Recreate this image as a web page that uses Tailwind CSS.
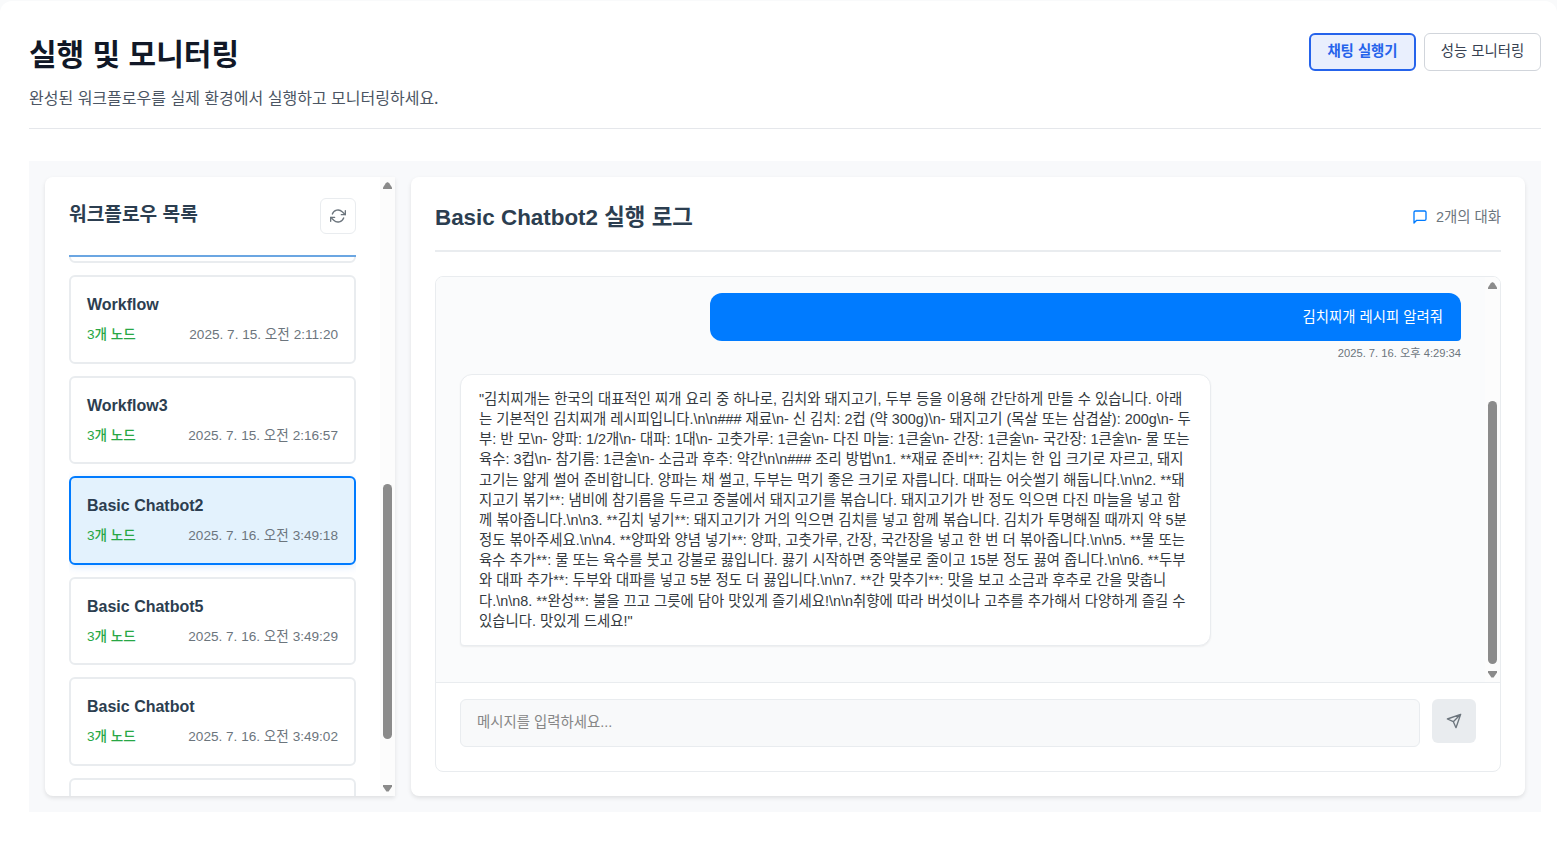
<!DOCTYPE html>
<html lang="ko">
<head>
<meta charset="utf-8">
<title>실행 및 모니터링</title>
<script src="https://cdn.jsdelivr.net/npm/@tailwindcss/browser@4"></script>
</head>
<body class="h-[845px] overflow-hidden bg-[#f9fafb] pt-px font-['Liberation_Sans','Noto_Sans_CJK_KR',sans-serif]">
<main class="h-[844px] rounded-t-xl bg-white pl-[29px] pr-4">
  <header class="flex h-32 items-start justify-between border-b border-[#e5e7eb] pt-8 font-['Noto_Sans_CJK_KR',sans-serif]">
    <div class="-mt-[2px]">
      <h1 class="h-[42px] text-[30px] leading-[42px] font-bold whitespace-nowrap text-[#111827]">실행 및 모니터링</h1>
      <p class="mt-3 h-6 text-[16px] leading-6 whitespace-nowrap text-[#4b5563]">완성된 워크플로우를 실제 환경에서 실행하고 모니터링하세요.</p>
    </div>
    <div class="flex gap-2 text-[14.4px]">
      <button class="flex h-[38px] w-[107px] items-center justify-center rounded-md border-2 border-[#2563eb] bg-[#e9effd] pb-[5px] font-bold whitespace-nowrap text-[#2563eb]">채팅 실행기</button>
      <button class="flex h-[38px] w-[117px] items-center justify-center rounded-md border border-[#d1d5db] bg-white pb-[5px] whitespace-nowrap text-[#374151]">성능 모니터링</button>
    </div>
  </header>

  <section class="mt-8 flex h-[651px] gap-4 bg-[#f8f9fb] px-4 pt-4 pb-4">
    <aside class="flex h-[619px] w-[350px] shrink-0 rounded-l-lg bg-white shadow-[0_2px_4px_rgba(0,0,0,0.1)]">
      <div class="flex w-[335px] flex-col overflow-hidden rounded-l-lg pr-6 pl-6">
        <div class="flex h-20 shrink-0 items-start justify-between border-b-2 border-[#6ba6e2] pt-[21px]">
          <h2 class="pt-px text-[19.2px] leading-[32px] font-bold whitespace-nowrap text-[#2c3e50]">워크플로우 목록</h2>
          <button class="flex size-9 items-center justify-center rounded-md border border-[#e9ecef] bg-white text-[#6c757d]">
            <svg class="size-4" viewBox="0 0 24 24" fill="none" stroke="currentColor" stroke-width="2" stroke-linecap="round" stroke-linejoin="round"><path d="M23 4v6h-6M1 20v-6h6"/><path d="M3.51 9a9 9 0 0 1 14.85-3.36L23 10M1 14l4.64 4.36A9 9 0 0 0 20.49 15"/></svg>
          </button>
        </div>
        <div class="flex min-h-0 flex-1 flex-col gap-3 overflow-hidden">
          <div class="-mt-[82px] h-[88.45px] shrink-0 rounded-md border-2 border-[#e9ecef]"></div>
          <div class="h-[88.45px] shrink-0 rounded-md border-2 border-[#e9ecef] px-4 pt-[15.6px]">
            <h3 class="text-base leading-6 font-bold text-[#2c3e50]">Workflow</h3>
            <div class="mt-2 flex justify-between text-[13.6px] leading-5 whitespace-nowrap text-[#6c757d]"><span class="font-medium text-[#28a745]">3개 노드</span><span>2025. 7. 15. 오전 2:11:20</span></div>
          </div>
          <div class="h-[88.45px] shrink-0 rounded-md border-2 border-[#e9ecef] px-4 pt-4">
            <h3 class="text-base leading-6 font-bold text-[#2c3e50]">Workflow3</h3>
            <div class="mt-2 flex justify-between text-[13.6px] leading-5 whitespace-nowrap text-[#6c757d]"><span class="font-medium text-[#28a745]">3개 노드</span><span>2025. 7. 15. 오전 2:16:57</span></div>
          </div>
          <div class="h-[88.45px] shrink-0 rounded-md border-2 border-[#007bff] bg-[#e3f2fd] px-4 pt-[15.6px] shadow-[0_2px_8px_rgba(0,123,255,0.15)]">
            <h3 class="text-base leading-6 font-bold text-[#2c3e50]">Basic Chatbot2</h3>
            <div class="mt-2 flex justify-between text-[13.6px] leading-5 whitespace-nowrap text-[#6c757d]"><span class="font-medium text-[#28a745]">3개 노드</span><span>2025. 7. 16. 오전 3:49:18</span></div>
          </div>
          <div class="h-[88.45px] shrink-0 rounded-md border-2 border-[#e9ecef] px-4 pt-4">
            <h3 class="text-base leading-6 font-bold text-[#2c3e50]">Basic Chatbot5</h3>
            <div class="mt-2 flex justify-between text-[13.6px] leading-5 whitespace-nowrap text-[#6c757d]"><span class="font-medium text-[#28a745]">3개 노드</span><span>2025. 7. 16. 오전 3:49:29</span></div>
          </div>
          <div class="h-[88.45px] shrink-0 rounded-md border-2 border-[#e9ecef] px-4 pt-[15.6px]">
            <h3 class="text-base leading-6 font-bold text-[#2c3e50]">Basic Chatbot</h3>
            <div class="mt-2 flex justify-between text-[13.6px] leading-5 whitespace-nowrap text-[#6c757d]"><span class="font-medium text-[#28a745]">3개 노드</span><span>2025. 7. 16. 오전 3:49:02</span></div>
          </div>
          <div class="h-[88.45px] shrink-0 rounded-md border-2 border-[#e9ecef]"></div>
        </div>
      </div>
      <div class="flex w-[15px] flex-col items-center bg-[#fcfcfc] pt-[5px]">
        <svg class="h-2 w-[9px] shrink-0" viewBox="0 0 9 8" fill="#8b8b8b"><path d="M4 .2h1L6.2 1.2 9 5.6V7H0V5.6L2.8 1.2z"/></svg>
        <div class="mt-[294px] h-[255px] w-[9px] shrink-0 rounded-full bg-[#8b8b8b]"></div>
        <svg class="mt-[45px] h-2 w-[9px] shrink-0" viewBox="0 0 9 8" fill="#8b8b8b"><path d="M0 1h9v1.4L5.6 7.4H3.4L0 2.4z"/></svg>
      </div>
    </aside>

    <article class="flex h-[619px] w-[1114px] shrink-0 flex-col rounded-lg bg-white px-6 shadow-[0_2px_4px_rgba(0,0,0,0.1)]">
      <div class="flex h-[75px] shrink-0 items-center justify-between border-b-2 border-[#e9ecef] pt-[6px]">
        <h2 class="pt-[2px] text-[22.4px] leading-8 font-bold whitespace-nowrap text-[#2c3e50]">Basic Chatbot2 실행 로그</h2>
        <div class="flex items-center gap-2 text-[14.4px] leading-5 whitespace-nowrap text-[#6c757d]">
          <svg class="size-4 text-[#007bff]" viewBox="0 0 24 24" fill="none" stroke="currentColor" stroke-width="2" stroke-linecap="round" stroke-linejoin="round"><path d="M21 15a2 2 0 0 1-2 2H7l-4 4V5a2 2 0 0 1 2-2h14a2 2 0 0 1 2 2z"/></svg>
          <span>2개의 대화</span>
        </div>
      </div>
      <div class="mt-6 flex h-[496px] shrink-0 flex-col overflow-hidden rounded-lg border border-[#e9ecef]">
        <div class="flex h-[405px] shrink-0 bg-[#fafbfc]">
          <div class="flex w-[1049px] flex-col px-6 pt-4">
            <div class="flex h-12 w-[751px] items-center justify-end self-end rounded-[12px] rounded-br-[4px] bg-[#007bff] px-[18px] pt-[2px] text-[14.4px] whitespace-nowrap text-white">김치찌개 레시피 알려줘</div>
            <div class="mt-1 h-4 self-end text-[11.2px] leading-4 whitespace-nowrap text-[#6c757d]">2025. 7. 16. 오후 4:29:34</div>
            <div class="mt-[13px] h-[272px] w-[751px] shrink-0 rounded-[12px] rounded-bl-[4px] border border-[#e9ecef] bg-white px-[18px] pt-[14px] text-[14.4px] leading-[20.16px] whitespace-nowrap text-[#343a40] shadow-[0_1px_2px_rgba(0,0,0,0.06)]">
              <p>"김치찌개는 한국의 대표적인 찌개 요리 중 하나로, 김치와 돼지고기, 두부 등을 이용해 간단하게 만들 수 있습니다. 아래</p>
              <p>는 기본적인 김치찌개 레시피입니다.\n\n### 재료\n- 신 김치: 2컵 (약 300g)\n- 돼지고기 (목살 또는 삼겹살): 200g\n- 두</p>
              <p>부: 반 모\n- 양파: 1/2개\n- 대파: 1대\n- 고춧가루: 1큰술\n- 다진 마늘: 1큰술\n- 간장: 1큰술\n- 국간장: 1큰술\n- 물 또는</p>
              <p>육수: 3컵\n- 참기름: 1큰술\n- 소금과 후추: 약간\n\n### 조리 방법\n1. **재료 준비**: 김치는 한 입 크기로 자르고, 돼지</p>
              <p>고기는 얇게 썰어 준비합니다. 양파는 채 썰고, 두부는 먹기 좋은 크기로 자릅니다. 대파는 어슷썰기 해둡니다.\n\n2. **돼</p>
              <p>지고기 볶기**: 냄비에 참기름을 두르고 중불에서 돼지고기를 볶습니다. 돼지고기가 반 정도 익으면 다진 마늘을 넣고 함</p>
              <p>께 볶아줍니다.\n\n3. **김치 넣기**: 돼지고기가 거의 익으면 김치를 넣고 함께 볶습니다. 김치가 투명해질 때까지 약 5분</p>
              <p>정도 볶아주세요.\n\n4. **양파와 양념 넣기**: 양파, 고춧가루, 간장, 국간장을 넣고 한 번 더 볶아줍니다.\n\n5. **물 또는</p>
              <p>육수 추가**: 물 또는 육수를 붓고 강불로 끓입니다. 끓기 시작하면 중약불로 줄이고 15분 정도 끓여 줍니다.\n\n6. **두부</p>
              <p>와 대파 추가**: 두부와 대파를 넣고 5분 정도 더 끓입니다.\n\n7. **간 맞추기**: 맛을 보고 소금과 후추로 간을 맞춥니</p>
              <p>다.\n\n8. **완성**: 불을 끄고 그릇에 담아 맛있게 즐기세요!\n\n취향에 따라 버섯이나 고추를 추가해서 다양하게 즐길 수</p>
              <p>있습니다. 맛있게 드세요!"</p>
            </div>
          </div>
          <div class="flex w-[15px] flex-col items-center bg-[#fcfcfc] pt-[5px]">
            <svg class="h-2 w-[9px] shrink-0" viewBox="0 0 9 8" fill="#8b8b8b"><path d="M4 .2h1L6.2 1.2 9 5.6V7H0V5.6L2.8 1.2z"/></svg>
            <div class="mt-[111px] h-[263px] w-[9px] shrink-0 rounded-full bg-[#8b8b8b]"></div>
            <svg class="mt-[6px] h-2 w-[9px] shrink-0" viewBox="0 0 9 8" fill="#8b8b8b"><path d="M0 1h9v1.4L5.6 7.4H3.4L0 2.4z"/></svg>
          </div>
        </div>
        <div class="flex flex-1 items-start gap-3 border-t border-[#e9ecef] px-6 pt-4">
          <div class="flex h-12 w-[960px] items-center rounded-md border border-[#e9ecef] bg-[#f8f9fa] px-4 text-[14.4px] whitespace-nowrap text-[#868686]">메시지를 입력하세요...</div>
          <button class="flex size-11 items-center justify-center rounded-md bg-[#e9ecef] text-[#6c757d]">
            <svg class="size-4" viewBox="0 0 24 24" fill="none" stroke="currentColor" stroke-width="2" stroke-linecap="round" stroke-linejoin="round"><path d="M22 2 11 13M22 2l-7 20-4-9-9-4z"/></svg>
          </button>
        </div>
      </div>
    </article>
  </section>
</main>
</body>
</html>
